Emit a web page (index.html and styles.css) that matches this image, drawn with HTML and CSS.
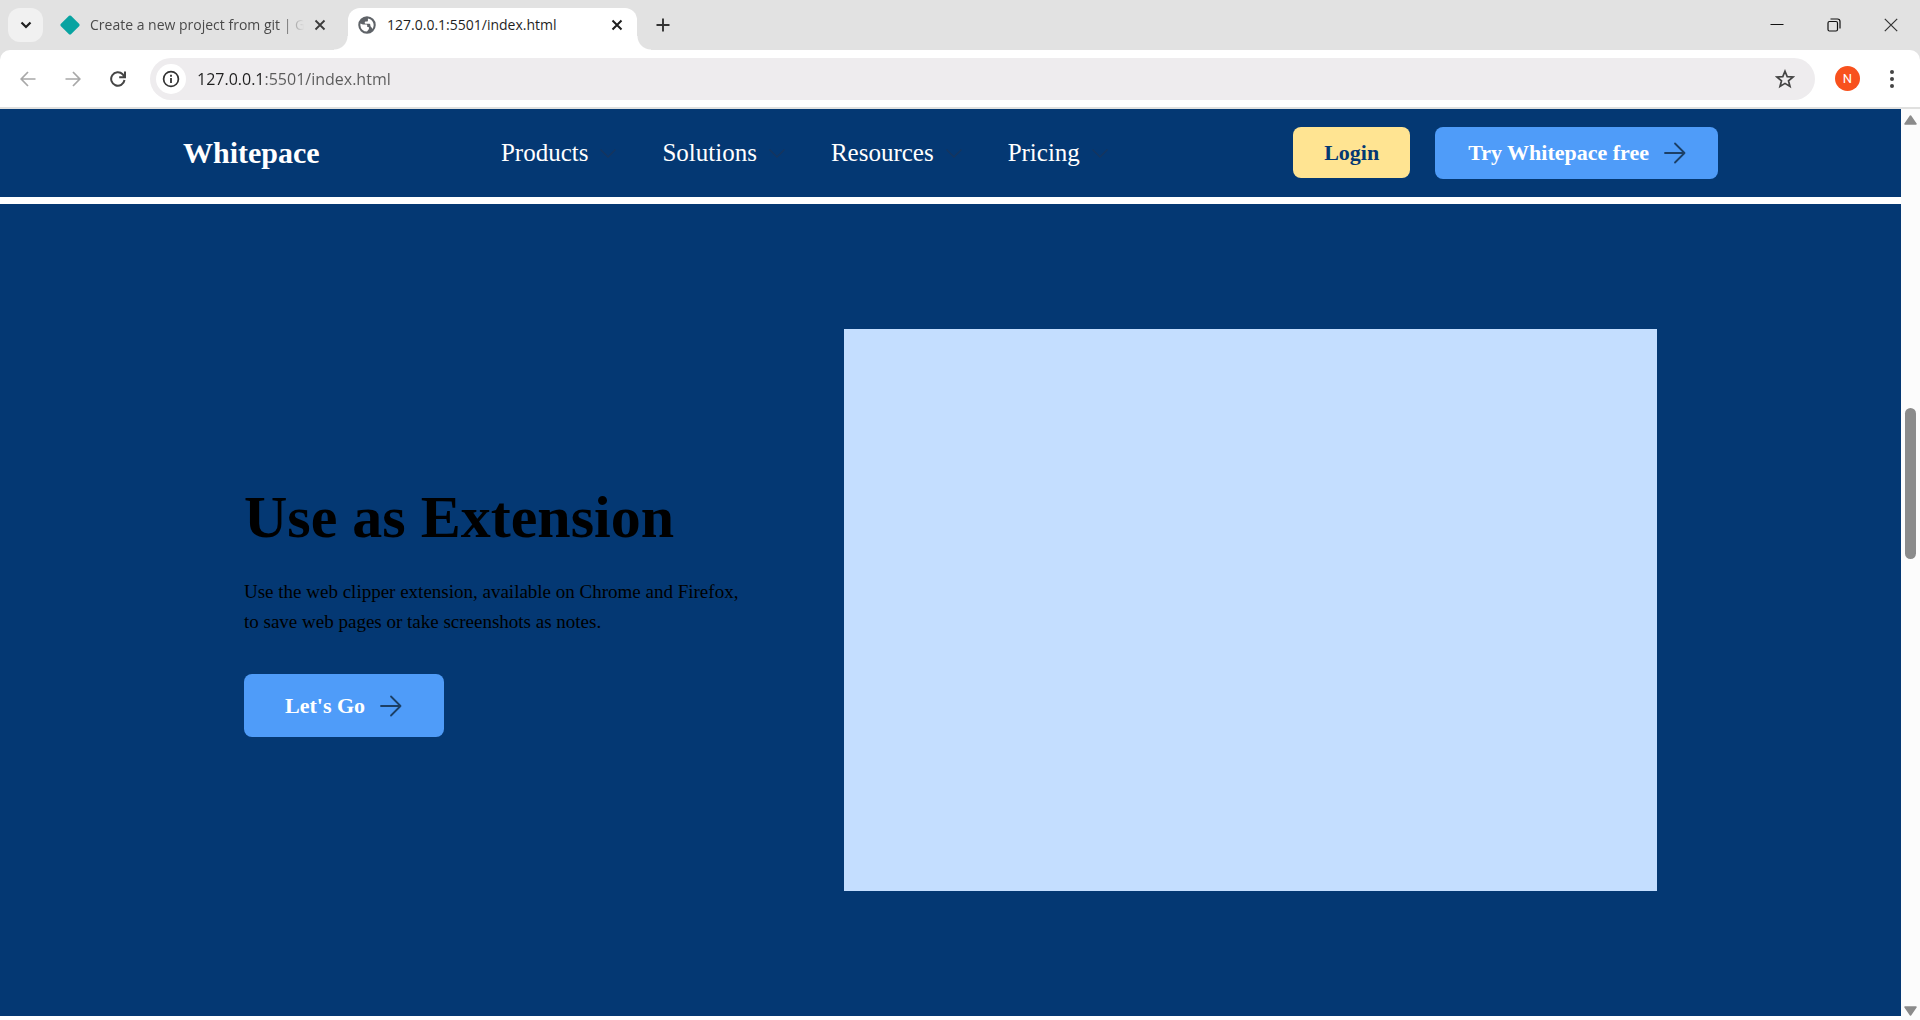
FILE: index.html
```html
<!DOCTYPE html>
<html lang="en">
<head>
<meta charset="utf-8">
<title>Whitepace</title>
<link rel="stylesheet" href="styles.css">
</head>
<body>
<header class="chrome">
  <div class="tabstrip">
    <button class="tab-search" aria-label="Search tabs"><svg width="12" height="8" viewBox="0 0 12 8"><path d="M1.500 1.500L6 6L10.500 1.500" fill="none" stroke="#1f1f1f" stroke-width="2.200"/></svg></button>
    <div class="tab">
      <svg class="tab-icon" width="20" height="20" viewBox="0 0 20 20"><path d="M9 .8Q10 0 11 .8L19.300 9Q20 10 19.300 11L11 19.300Q10 20 9 19.300L.7 11Q0 10 .7 9Z" fill="#08a3a1"/></svg>
      <span class="tab-title faded">Create a new project from git | G</span>
      <button class="tab-close" aria-label="Close tab"><svg width="12" height="12" viewBox="0 0 12 12"><path d="M1.500 1.500l9 9M10.500 1.500l-9 9" stroke="#3c3c3c" stroke-width="1.800"/></svg></button>
    </div>
    <div class="tab active">
      <svg class="tab-icon" width="20" height="20" viewBox="0 0 24 24"><path fill="#5f6368" d="M12 1.500a10.500 10.500 0 1 0 0 21a10.500 10.500 0 0 0 0-21zM4 12c0-.6.100-1.200.200-1.800l2.800 1.300h4.200c.8 0 1 .5 1 1v1.200c0 .6.4.8.8.8h.6c.6 0 .7.4.7.8v1.500l-2.300 3.100A8 8 0 0 1 4 12zm14.500 4.700c-.5-.7-.9-1.700-1.600-2.200c-.8-.6-.9-1.800-.9-2.700c0-.8-.7-1.300-1.300-1.300h-4.400c-.7 0-1-.4-1-1V8.600c0-.5.5-.9 1-.9h1.600c.8 0 1.200-.5 1.200-1.200V4.200A8 8 0 0 1 18.500 16.700z"/></svg>
      <span class="tab-title">127.0.0.1:5501/index.html</span>
      <button class="tab-close" aria-label="Close tab"><svg width="12" height="12" viewBox="0 0 12 12"><path d="M1.500 1.500l9 9M10.500 1.500l-9 9" stroke="#1f1f1f" stroke-width="2"/></svg></button>
    </div>
    <button class="new-tab" aria-label="New tab"><svg width="14" height="14" viewBox="0 0 14 14"><path d="M7 .5v13M.5 7h13" stroke="#333" stroke-width="1.900"/></svg></button>
    <div class="window-controls">
      <button aria-label="Minimize"><svg width="14" height="14" viewBox="0 0 14 14"><path d="M.5 6.500h13" stroke="#111"/></svg></button>
      <button aria-label="Restore"><svg width="14" height="14" viewBox="0 0 14 14"><rect x="1" y="3.500" width="9.500" height="9.500" rx="1.500" fill="none" stroke="#111" stroke-width="1.200"/><path d="M3.500 1H10.500Q13 1 13 3.500V10.500" fill="none" stroke="#111" stroke-width="1.200"/></svg></button>
      <button aria-label="Close"><svg width="14" height="14" viewBox="0 0 14 14"><path d="M.8.8l12.400 12.400M13.200.8L.8 13.200" stroke="#333" stroke-width="1.200"/></svg></button>
    </div>
  </div>
  <div class="toolbar">
    <div class="history">
      <button aria-label="Back"><svg width="16" height="16" viewBox="0 0 16 16"><path d="M15.500 8H1.500M8 1L1.200 8L8 15" fill="none" stroke="#a8a8a8" stroke-width="1.700"/></svg></button>
      <button aria-label="Forward"><svg width="16" height="16" viewBox="0 0 16 16"><path d="M.5 8H14.500M8 1l6.800 7L8 15" fill="none" stroke="#a8a8a8" stroke-width="1.700"/></svg></button>
      <button aria-label="Reload"><svg width="16" height="16" viewBox="0 0 16 16"><path d="M14.500 9A6.700 6.700 0 1 1 12.700 3.300L14.500 5.500M15 .5V6.200H9.200" fill="none" stroke="#444" stroke-width="2"/></svg></button>
    </div>
    <div class="omnibox">
      <button class="site-info" aria-label="View site information"><svg width="18" height="18" viewBox="0 0 18 18"><circle cx="9" cy="9" r="7.400" fill="none" stroke="#333" stroke-width="1.700"/><path d="M9 8v5M9 4.800v1.900" stroke="#333" stroke-width="1.800"/></svg></button>
      <input class="address" type="text" aria-label="Address" value="127.0.0.1:5501/index.html">
      <button class="bookmark" aria-label="Bookmark this tab"><svg width="20" height="20" viewBox="0 0 20 20"><path d="M10 2.200L12.200 7.600L18 8L13.500 11.800L15 17.500L10 14.400L5 17.500L6.500 11.800L2 8L7.800 7.600Z" fill="none" stroke="#444" stroke-width="1.700"/></svg></button>
    </div>
    <button class="avatar" aria-label="Profile">N</button>
    <button class="menu" aria-label="Menu"><svg width="6" height="20" viewBox="0 0 6 20"><g fill="#444"><circle cx="3" cy="3" r="2"/><circle cx="3" cy="10" r="2"/><circle cx="3" cy="17" r="2"/></g></svg></button>
  </div>
</header>
<div class="viewport">
  <main class="page">
    <nav class="navbar">
      <a class="brand" href="#">Whitepace</a>
      <ul class="nav-links">
        <li><a href="#">Products<svg width="24" height="24" viewBox="0 0 24 24"><path d="M4.500 8.500L12 16L19.500 8.500" fill="none" stroke="#15355f" stroke-width="1.500"/></svg></a></li>
        <li><a href="#">Solutions<svg width="24" height="24" viewBox="0 0 24 24"><path d="M4.500 8.500L12 16L19.500 8.500" fill="none" stroke="#15355f" stroke-width="1.500"/></svg></a></li>
        <li><a href="#">Resources<svg width="24" height="24" viewBox="0 0 24 24"><path d="M4.500 8.500L12 16L19.500 8.500" fill="none" stroke="#15355f" stroke-width="1.500"/></svg></a></li>
        <li><a href="#">Pricing<svg width="24" height="24" viewBox="0 0 24 24"><path d="M4.500 8.500L12 16L19.500 8.500" fill="none" stroke="#15355f" stroke-width="1.500"/></svg></a></li>
      </ul>
      <div class="nav-actions">
        <button class="btn btn-login">Login</button>
        <button class="btn btn-try">Try Whitepace free<svg width="24" height="24" viewBox="0 0 24 24"><path d="M2 12H21.500M12 2.500L21.500 12L12 21.500" fill="none" stroke="#1c3f66" stroke-width="1.800" stroke-linecap="round" stroke-linejoin="round"/></svg></button>
      </div>
    </nav>
    <section class="hero">
      <div class="hero-text">
        <h1>Use as Extension</h1>
        <p>Use the web clipper extension, available on Chrome and Firefox, to save web pages or take screenshots as notes.</p>
        <button class="btn btn-go">Let's Go<svg width="24" height="24" viewBox="0 0 24 24"><path d="M2 12H21.500M12 2.500L21.500 12L12 21.500" fill="none" stroke="#1c3f66" stroke-width="1.800" stroke-linecap="round" stroke-linejoin="round"/></svg></button>
      </div>
      <div class="hero-image"></div>
    </section>
  </main>
  <div class="scrollbar" aria-hidden="true">
    <svg width="13" height="10" viewBox="0 0 13 10"><path d="M6.500 1L12 9H1Z" fill="#8b8b8b" stroke="#8b8b8b" stroke-width="1.500" stroke-linejoin="round"/></svg>
    <div class="track"><div class="thumb"></div></div>
    <svg width="13" height="10" viewBox="0 0 13 10"><path d="M6.500 9L12 1H1Z" fill="#8b8b8b" stroke="#8b8b8b" stroke-width="1.500" stroke-linejoin="round"/></svg>
  </div>
</div>
</body>
</html>
```
FILE: styles.css
```css
* {
  box-sizing: border-box;
}

body {
  margin: 0;
  height: 100vh;
  display: flex;
  flex-direction: column;
  overflow: hidden;
  background: #fff;
  font-family: "Liberation Serif", "Times New Roman", serif;
}

button {
  border: 0;
  padding: 0;
  background: none;
  font: inherit;
  cursor: pointer;
}

svg {
  display: block;
  flex: none;
}

/* Browser window */
.chrome {
  flex: none;
  background: #e2e2e2;
  font-family: "Open Sans", "Noto Sans", sans-serif;
}

.tabstrip {
  display: flex;
  height: 50px;
  padding: 8px 0 0 8px;
}

.tab-search {
  display: grid;
  place-items: center;
  width: 35px;
  height: 34px;
  border-radius: 12px;
  background: #f1f1f1;
}

.tab {
  display: flex;
  align-items: center;
  width: 296px;
  height: 42px;
  margin-left: 9px;
  padding: 0 22px 8px 8px;
  color: #4a4a4a;
}

.tab-icon {
  margin-right: 10px;
}

.tab-title {
  flex: 1;
  overflow: hidden;
  white-space: nowrap;
  font-size: 14px;
  line-height: 20px;
}

.faded {
  margin-right: 8px;
  -webkit-mask-image: linear-gradient(to right, #000 190px, transparent 214px);
  mask-image: linear-gradient(to right, #000 190px, transparent 214px);
}

.active {
  position: relative;
  width: 289px;
  margin-left: 0;
  padding-left: 9px;
  padding-right: 14px;
  border-radius: 12px 12px 0 0;
  background: #fff;
  color: #1f1f1f;
}

.active::before,
.active::after {
  content: "";
  position: absolute;
  bottom: 0;
  width: 14px;
  height: 14px;
}

.active::before {
  right: 100%;
  background: radial-gradient(circle at 0 0, transparent 13px, #fff 14px);
}

.active::after {
  left: 100%;
  background: radial-gradient(circle at 100% 0, transparent 13px, #fff 14px);
}

.new-tab {
  display: grid;
  place-items: center;
  width: 34px;
  height: 34px;
  margin-left: 9px;
}

.window-controls {
  display: flex;
  margin-left: auto;
  padding-right: 1px;
}

.window-controls button {
  display: grid;
  place-items: center;
  width: 57px;
  height: 34px;
}

.toolbar {
  display: flex;
  align-items: center;
  height: 59px;
  border-bottom: 2px solid #e0e0df;
  border-radius: 10px 10px 0 0;
  background: #fff;
}

.history {
  display: flex;
  gap: 29px;
  padding: 0 24px 0 20px;
}

.omnibox {
  flex: 1;
  display: flex;
  align-items: center;
  height: 42px;
  padding: 0 20px 0 6px;
  border-radius: 21px;
  background: #eeecee;
}

.site-info {
  display: grid;
  place-items: center;
  width: 30px;
  height: 30px;
  border-radius: 50%;
  background: #fff;
}

.address {
  flex: 1;
  margin-left: 11px;
  padding: 0;
  border: 0;
  outline: 0;
  background: linear-gradient(to right, #1f1f1f 67px, #5a5a5a 67px);
  -webkit-background-clip: text;
  background-clip: text;
  color: transparent;
  font: 16px/24px "Open Sans", "Noto Sans", sans-serif;
}

.avatar {
  width: 25px;
  height: 25px;
  margin-left: 20px;
  border-radius: 50%;
  background: #f8511d;
  color: #fff;
  font-family: Roboto, sans-serif;
  font-size: 13px;
}

.menu {
  margin: 0 25px 0 29px;
}

/* Web page */
.viewport {
  flex: 1;
  display: flex;
  min-height: 0;
}

.page {
  flex: 1;
  min-width: 0;
}

.navbar {
  display: flex;
  justify-content: space-between;
  align-items: center;
  margin-bottom: 7px;
  padding: 18px 183px;
  background: #043873;
}

.brand {
  color: #fff;
  font-size: 30px;
  font-weight: bold;
  text-decoration: none;
}

.nav-links {
  display: flex;
  gap: 42px;
  margin: 0;
  padding: 0;
  list-style: none;
}

.nav-links a {
  display: flex;
  align-items: center;
  gap: 8px;
  color: #fff;
  font-size: 25px;
  text-decoration: none;
}

.nav-actions {
  display: flex;
  align-items: flex-start;
  gap: 25px;
}

.btn {
  display: flex;
  align-items: center;
  gap: 14px;
  height: 52px;
  padding: 0 31px;
  border-radius: 8px;
  background: #4f9cf9;
  color: #fff;
  font-size: 22px;
  font-weight: bold;
}

.btn-login {
  height: 51px;
  background: #ffe492;
  color: #043873;
}

.btn-try {
  padding-left: 33px;
}

.btn-go {
  height: 63px;
  padding: 0 41px;
}

.hero {
  display: grid;
  grid-template-columns: 600px 1fr;
  align-items: center;
  padding: 125px 244px;
  background: #043873;
}

.hero-text {
  display: flex;
  flex-direction: column;
  align-items: flex-start;
}

.hero-text h1 {
  margin: 0;
  font-size: 60px;
  line-height: 68px;
}

.hero-text p {
  max-width: 500px;
  margin: 26px 0 37px;
  font-size: 19px;
  line-height: 30px;
}

.hero-image {
  height: 562px;
  background: #c4deff;
}

.scrollbar {
  display: flex;
  flex-direction: column;
  align-items: center;
  width: 19px;
  padding: 6px 0 4px;
  background: #fcfcfc;
}

.track {
  flex: 1;
  display: grid;
  grid-template-rows: 283fr 151fr 447fr;
}

.thumb {
  grid-row: 2;
  width: 11px;
  border-radius: 6px;
  background: #8b8b8b;
}
```
